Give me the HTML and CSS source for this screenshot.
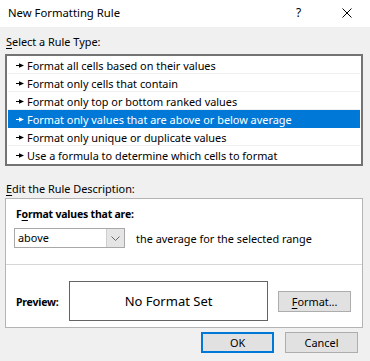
FILE: index.html
```html
<!DOCTYPE html>
<html lang="en">
<head>
    <meta charset="UTF-8">
    <title>New Formatting Rule</title>
    <link rel="stylesheet" href="styles.css">
</head>
<body>

    <div class="dialog">
        <div class="titlebar">
            <span class="title">New Formatting Rule</span>
            <span class="help">?</span>
            <span class="close">
                <svg width="10" height="10" viewBox="0 0 10 10">
                    <path d="M0.5 0.5 L9.5 9.5 M9.5 0.5 L0.5 9.5" stroke="#000" stroke-width="1" fill="none"/>
                </svg>
            </span>
        </div>

        <div class="content">
            <div class="label"><u>S</u>elect a Rule Type:</div>

            <ul class="rules">
                <li><span class="pointer"></span>Format all cells based on their values</li>
                <li><span class="pointer"></span>Format only cells that contain</li>
                <li><span class="pointer"></span>Format only top or bottom ranked values</li>
                <li class="selected"><span class="pointer"></span>Format only values that are above or below average</li>
                <li><span class="pointer"></span>Format only unique or duplicate values</li>
                <li><span class="pointer"></span>Use a formula to determine which cells to format</li>
            </ul>

            <div class="label label-edit"><u>E</u>dit the Rule Description:</div>

            <div class="description">
                <div class="desc-top">
                    <div class="bold-label">F<u>o</u>rmat values that are:</div>
                    <div class="criteria">
                        <div class="select">
                            <span class="select-value">above</span>
                            <span class="select-btn">
                                <svg width="9" height="5" viewBox="0 0 9 5">
                                    <path d="M0.5 0.5 L4.5 4.5 L8.5 0.5" stroke="#6a6a6a" stroke-width="1" fill="none"/>
                                </svg>
                            </span>
                        </div>
                        <span class="criteria-text">the average for the selected range</span>
                    </div>
                </div>

                <div class="preview-row">
                    <span class="preview-label">Preview:</span>
                    <div class="preview-box">No Format Set</div>
                    <button class="btn btn-format"><u>F</u>ormat...</button>
                </div>
            </div>

            <div class="actions">
                <button class="btn btn-ok">OK</button>
                <button class="btn">Cancel</button>
            </div>
        </div>
    </div>

    <script>
        // draw the little pointer in front of every rule
        document.querySelectorAll(".pointer").forEach(p => {
            p.innerHTML = '<svg width="8" height="5" viewBox="0 0 8 5"><rect x="0" y="2" width="4" height="1" fill="currentColor"/><polygon points="3,0.3 8,2.5 3,4.7" fill="currentColor"/></svg>';
        });
    </script>
</body>
</html>
```
FILE: styles.css
```css
body {
    margin: 0;
    padding: 0;
    font-family: "Noto Sans", sans-serif;
    font-size: 10.9px;
    color: #000;
    background-color: #f0f0f0;
}

u {
    text-decoration: underline;
    text-decoration-thickness: 1px;
    text-underline-offset: 2px;
}

.dialog {
    width: 370px;
    height: 361px;
    background-color: #f0f0f0;
    overflow: hidden;
}

.titlebar {
    height: 27px;
    background-color: #fff;
    display: flex;
    align-items: center;
    padding: 0 0 2px 8px;
    box-sizing: border-box;
}

.title {
    font-size: 11.3px;
    flex: 1;
}

.help {
    font-size: 12px;
    width: 8px;
    margin-right: 38px;
}

.close {
    display: flex;
    margin-right: 18px;
}

.content {
    padding: 0 7px 0 5px;
}

.label {
    line-height: 16px;
    padding-top: 7px;
    padding-left: 1px;
}

.label-edit {
    padding-top: 15px;
}

.rules {
    list-style: none;
    margin: 4px 0 0 0;
    padding: 0 1px;
    border: 2px solid #737373;
    background-color: #fff;
}

.rules li {
    height: 18px;
    box-sizing: border-box;
    border-bottom: 1px solid #f0f0f0;
    display: flex;
    align-items: center;
    padding-left: 8px;
    padding-top: 1px;
    white-space: nowrap;
}

.rules li:last-child {
    border-bottom: none;
}

.rules li.selected {
    background-color: #0078d7;
    color: #fff;
    border-bottom-color: #0078d7;
}

.pointer {
    display: flex;
    margin-right: 3px;
}

.description {
    margin-top: 1px;
    border: 1px solid #b4b4b4;
    background-color: #fff;
}

.desc-top {
    padding: 7px 8px 16px 8px;
    border-bottom: 1px solid #d6d6d6;
}

.bold-label {
    font-weight: bold;
    font-size: 10.5px;
    letter-spacing: -0.2px;
    line-height: 16px;
    padding-left: 2px;
}

.criteria {
    display: flex;
    align-items: center;
    margin-top: 6px;
}

.select {
    width: 111px;
    height: 20px;
    box-sizing: border-box;
    border: 1px solid #a8a8a8;
    display: flex;
    align-items: stretch;
}

.select-value {
    flex: 1;
    padding-left: 3px;
    line-height: 17px;
}

.select-btn {
    width: 17px;
    background-color: #e5e5e5;
    border-left: 1px solid #cfcfcf;
    display: flex;
    align-items: center;
    justify-content: center;
}

.criteria-text {
    margin-left: 11px;
    padding-top: 1px;
}

.preview-row {
    display: flex;
    align-items: center;
    padding: 16px 11px 6px 10px;
}

.preview-label {
    font-weight: bold;
    font-size: 10.5px;
    letter-spacing: -0.2px;
    width: 53px;
    padding-top: 2px;
}

.preview-box {
    width: 200px;
    height: 40px;
    box-sizing: border-box;
    border: 1px solid #646464;
    display: flex;
    align-items: center;
    justify-content: center;
    font-size: 13px;
}

.btn {
    font-family: "Noto Sans", sans-serif;
    font-size: 10.9px;
    color: #000;
    width: 73px;
    height: 21px;
    padding: 0;
    background-color: #e1e1e1;
    border: 1px solid #adadad;
    border-radius: 0;
}

.btn-format {
    margin-left: 10px;
}

.actions {
    display: flex;
    justify-content: flex-end;
    gap: 11px;
    margin-top: 4px;
    padding-right: 5px;
}

.btn-ok {
    border: 2px solid #0078d7;
}
```
